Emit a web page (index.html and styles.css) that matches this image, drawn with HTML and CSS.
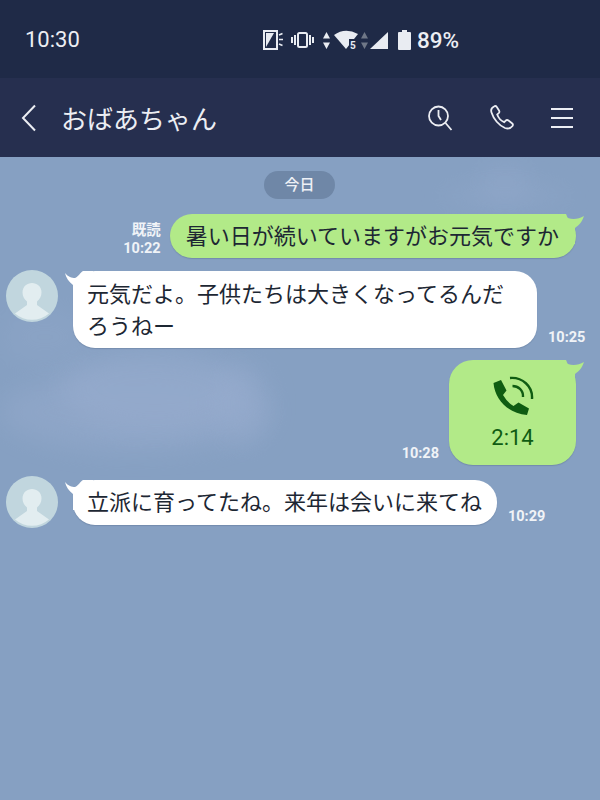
FILE: index.html
```html
<!DOCTYPE html>
<html lang="ja">
<head>
<meta charset="utf-8">
<title>おばあちゃん</title>
<link rel="stylesheet" href="styles.css">
</head>
<body>
<div class="screen">
  <div class="status">
    <span class="clock">10:30</span>
    <div class="status-icons">
      <svg class="ic-rot" width="20" height="20" viewBox="0 0 20 20"><rect x="1" y="1" width="13" height="18" fill="none" stroke="#e9ecf2" stroke-width="2"/><path d="M3 17V3h8z" fill="#e9ecf2"/><path d="M16 5l3.500-1.500M16 9.500h4M16 14l3.500 1.500" stroke="#e9ecf2" stroke-width="1.600" fill="none"/></svg>
      <svg class="ic-vib" width="23" height="16" viewBox="0 0 23 16"><rect x="7" y="1" width="9" height="14" rx="1.500" fill="none" stroke="#e9ecf2" stroke-width="2"/><path d="M4 3v10M1 5v6M19 3v10M22 5v6" stroke="#e9ecf2" stroke-width="2" fill="none"/></svg>
      <svg class="ic-net" width="7" height="17" viewBox="0 0 7 17"><path d="M3.500 0L7 6.500H0zM3.500 17L0 10.500h7z" fill="#e9ecf2"/></svg>
      <svg class="ic-wifi" width="24" height="20" viewBox="0 0 24 20"><path d="M0 5Q11-3 24 4L12 19z" fill="#e9ecf2"/><rect x="15" y="9" width="9" height="11" fill="#1f2a47"/><text x="16" y="19" class="five">5</text></svg>
      <svg class="ic-net2" width="7" height="17" viewBox="0 0 7 17"><path d="M3.500 0L7 6.500H0zM3.500 17L0 10.500h7z" fill="#6f7787"/></svg>
      <svg class="ic-sig" width="18" height="17" viewBox="0 0 18 17"><path d="M0 17L18 0v17z" fill="#e9ecf2"/></svg>
      <svg class="ic-bat" width="13" height="20" viewBox="0 0 13 20"><path d="M4 0h5v2h3a1 1 0 0 1 1 1v16a1 1 0 0 1-1 1H1a1 1 0 0 1-1-1V3a1 1 0 0 1 1-1h3z" fill="#e9ecf2"/></svg>
      <span class="pct">89%</span>
    </div>
  </div>
  <header class="nav">
    <svg class="back" width="18" height="28" viewBox="0 0 18 28"><path d="M15 1.500L3 14l12 12.500" fill="none" stroke="#eceef3" stroke-width="2"/></svg>
    <h1 class="title">おばあちゃん</h1>
    <div class="nav-icons">
      <svg width="26" height="26" viewBox="0 0 26 26"><circle cx="11.500" cy="11" r="9.500" fill="none" stroke="#eceef3" stroke-width="1.800"/><path d="M18.500 18l6 7M11.500 5v6l2.500 4" fill="none" stroke="#eceef3" stroke-width="1.800"/></svg>
      <svg width="26" height="26" viewBox="0 0 26 26"><path d="M5 1.500c-2 1-3.500 3-2.500 6 2 6.500 7.500 13 13.500 15.500 3 1 6 0 7.500-2 .8-1.200.5-2-.5-2.800l-3.500-2.700c-1-.7-2-.7-2.800.2l-1.500 1.500c-3-1.300-5.800-4.500-7-7.700l1.500-1.300c.8-.8.900-1.800.3-2.800L7.800 2c-.7-1-1.700-1.200-2.800-.5z" fill="none" stroke="#eceef3" stroke-width="1.800"/></svg>
      <svg width="22" height="22" viewBox="0 0 22 22"><path d="M0 2h22M0 11h22M0 20h22" stroke="#eceef3" stroke-width="2"/></svg>
    </div>
  </header>
  <main class="chat">
    <div class="cloud cloud-a"></div>
    <div class="cloud cloud-b"></div>
    <div class="cloud cloud-c"></div>
    <div class="cloud cloud-d"></div>
    <div class="cloud cloud-e"></div>
    <div class="cloud cloud-f"></div>
    <div class="date-row"><span class="date">今日</span></div>
    <div class="row row-out row-1">
      <div class="meta"><span>既読</span><span>10:22</span></div>
      <div class="bubble out first">暑い日が続いていますがお元気ですか<i class="tail tail-out"></i></div>
    </div>
    <div class="row row-in row-2">
      <div class="avatar"><svg width="52" height="52" viewBox="0 0 52 52"><circle cx="26" cy="26" r="26" fill="#c1d6de"/><path d="M26 13c5 0 9.500 3.500 9.500 9.500 0 4-2 7-4.500 9v3.500l12 8.500a26 26 0 0 1-34 0l12-8.500v-3.500c-2.500-2-4.500-5-4.500-9 0-6 4.500-9.500 9.500-9.500z" fill="#e2edf0"/></svg></div>
      <div class="bubble in wide">元気だよ。子供たちは大きくなってるんだろうねー<i class="tail tail-in"></i></div>
      <span class="time t-25">10:25</span>
    </div>
    <div class="row row-out row-3">
      <span class="time t-28">10:28</span>
      <div class="bubble out call">
        <svg width="41" height="40" viewBox="0 0 41 40"><path d="M.5 7L8 4l5.500 10.500L10 19q4 7 10.500 11l5-3.500L36 32.500 34 39C15 37 2 24 .5 7z" fill="#0f5c12"/><path d="M19.500 10c5.500 0 11 4 10.500 11" fill="none" stroke="#0f5c12" stroke-width="2.400"/><path d="M17 2c12-1 23 8 22 21" fill="none" stroke="#0f5c12" stroke-width="2.400"/></svg>
        <span class="dur">2:14</span>
        <i class="tail tail-out"></i>
      </div>
    </div>
    <div class="row row-in row-4">
      <div class="avatar"><svg width="52" height="52" viewBox="0 0 52 52"><circle cx="26" cy="26" r="26" fill="#c1d6de"/><path d="M26 13c5 0 9.500 3.500 9.500 9.500 0 4-2 7-4.500 9v3.500l12 8.500a26 26 0 0 1-34 0l12-8.500v-3.500c-2.500-2-4.500-5-4.500-9 0-6 4.500-9.500 9.500-9.500z" fill="#e2edf0"/></svg></div>
      <div class="bubble in single">立派に育ってたね。来年は会いに来てね<i class="tail tail-in"></i></div>
      <span class="time t-29">10:29</span>
    </div>
  </main>
</div>
</body>
</html>
```
FILE: styles.css
```css
* { box-sizing: border-box; }
html, body { margin: 0; padding: 0; }
body { width: 600px; height: 800px; overflow: hidden; font-family: "Noto Sans CJK JP", "Noto Sans", sans-serif; }
.screen { width: 600px; height: 800px; display: flex; flex-direction: column; background: #86a0c2; }

.status { height: 78px; flex: none; background: #1f2a47; color: #eceef3; display: flex; align-items: center; padding: 2px 0 0 25px; }
.clock { flex: none; width: 238px; font: 400 22px/1 Roboto, sans-serif; }
.status-icons { display: flex; align-items: center; height: 24px; }
.status-icons svg { flex: none; display: block; }
.ic-rot { margin-right: 8px; }
.ic-vib { margin-right: 9px; }
.ic-net { margin-right: 4px; }
.ic-wifi { margin-right: 3px; }
.ic-net2 { margin-right: 2px; }
.ic-sig { margin-right: 10px; }
.ic-bat { margin-right: 6px; }
.five { font: 700 10px/1 Roboto, sans-serif; fill: #e9ecf2; }
.pct { font: 500 22.500px/1 Roboto, sans-serif; }

.nav { height: 79px; flex: none; background: #262f4f; display: flex; align-items: center; padding: 1px 27px 0 20px; }
.back { flex: none; margin-right: 23px; }
.title { margin: 0; font-size: 26px; font-weight: 400; line-height: 1; color: #eceef3; flex: 1; }
.nav-icons { display: flex; align-items: center; gap: 36px; }
.nav-icons svg { display: block; }

.chat { flex: 1; position: relative; overflow: hidden; display: flex; flex-direction: column; }
.cloud { position: absolute; border-radius: 50%; filter: blur(13px); background: #9aaed0; }
.cloud-a { left: 0; top: 215px; width: 270px; height: 80px; opacity: .4; }
.cloud-b { left: 60px; top: 190px; width: 190px; height: 85px; opacity: .45; }
.cloud-c { left: 480px; top: 8px; width: 50px; height: 34px; opacity: .3; }
.cloud-d { left: 440px; top: 28px; width: 130px; height: 22px; opacity: .3; }
.cloud-e { left: 215px; top: 205px; width: 55px; height: 85px; opacity: .35; }
.cloud-f { left: 0; top: 150px; width: 90px; height: 60px; opacity: .2; }

.date-row { display: flex; justify-content: center; padding-top: 14px; position: relative; }
.date { width: 71px; height: 28px; margin-left: -1px; border-radius: 14px; background: #6f87a7; color: #eef1f6; font-size: 15px; font-weight: 500; line-height: 26px; text-align: center; }

.row { display: flex; position: relative; }
.row-out { justify-content: flex-end; padding-right: 24px; align-items: flex-end; }
.row-in { padding-left: 6px; align-items: flex-start; }
.row-1 { margin-top: 15px; }
.row-2 { margin-top: 12px; }
.row-3 { margin-top: 12px; }
.row-4 { margin-top: 11px; }

.bubble { position: relative; z-index: 0; color: #1d2733; font-size: 22px; line-height: 32px; box-shadow: 0 1px 1px rgba(50,70,100,.22); }
.out { background: #b2ea88; border-radius: 22px; margin-left: 9px; }
.first { height: 44px; padding: 4px 17px 0 16px; line-height: 33px; }
.in { background: #fff; border-radius: 22px; margin-left: 15px; margin-top: 1px; }
.wide { width: 464px; height: 77px; padding: 5px 15px 5px 14px; }
.single { margin-top: 4px; height: 45px; padding: 4px 15px 4px 14px; line-height: 33px; }
.tail { position: absolute; top: 0; display: block; z-index: -1; }
.tail-out { left: calc(100% - 24px); width: 32px; height: 30px; background: #b2ea88; clip-path: path("M14 0C15 2 15 3 16 4C21 6 27 5 32 2C30 8 27 11 23 14L23 30L0 30L0 0z"); }
.tail-in { left: -10px; width: 30px; height: 30px; background: #fff; clip-path: path("M2 2C5 6 9 7 12 7C15 6 17 2 20 0L30 0L30 30L10 30L10 14C6 11 3 7 2 2z"); }

.meta { display: flex; flex-direction: column; align-items: flex-end; color: #f0f3f7; font: 700 14.500px/18px Roboto, "Noto Sans CJK JP", sans-serif; }
.time { color: #f0f3f7; font: 700 14.500px/17px Roboto, sans-serif; }
.t-25 { margin-left: 11px; align-self: flex-end; margin-bottom: 2px; }
.t-28 { margin-bottom: 3px; margin-right: 1px; }
.t-29 { margin-left: 11px; align-self: flex-end; margin-bottom: 8px; }

.call { width: 127px; height: 105px; border-radius: 24px; padding: 16px 0 0; display: flex; flex-direction: column; align-items: center; }
.call svg { display: block; flex: none; margin-right: -1px; }
.dur { font: 400 22px/26px Roboto, sans-serif; color: #0f5c12; margin-top: 9px; }
```
